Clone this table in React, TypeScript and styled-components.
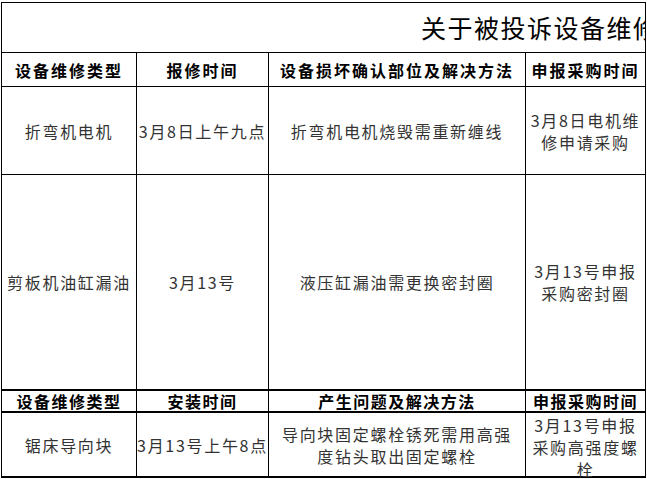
import React from "react";
import styled, { createGlobalStyle } from "styled-components";

const Global = createGlobalStyle`
  html, body {
    margin: 0;
    padding: 0;
    background: #ffffff;
  }
  body {
    font-family: "Noto Sans CJK SC", "Noto Sans", sans-serif;
    overflow: hidden;
  }
`;

const Sheet = styled.div`
  display: grid;
  grid-template-columns: 135px 132px 257px 120px;
  grid-template-rows: 50px 34px 88px 216px 22px 65px;
  width: max-content;
  margin: 2px 0 0 1px;
  border-left: 1px solid #000;
  border-top: 1px solid #000;
`;

const Cell = styled.div<{ $thick?: boolean }>`
  box-sizing: border-box;
  display: flex;
  flex-direction: column;
  align-items: center;
  justify-content: center;
  text-align: center;
  border-right: 1px solid #000;
  border-bottom: ${(p) => (p.$thick ? 2 : 1)}px solid #000;
  white-space: nowrap;
`;

const TitleCell = styled(Cell)`
  grid-column: 1 / -1;
  align-items: flex-start;
  padding-left: 419px;
  overflow: hidden;
  font-size: 25px;
  letter-spacing: 1.5px;
  color: #000;
  font-weight: 400;
  line-height: 1;
`;

const HeadCell = styled(Cell)<{ $tight?: boolean }>`
  font-size: 16px;
  font-weight: 700;
  letter-spacing: ${(p) => (p.$tight ? 1.5 : 2)}px;
  color: #000;
  line-height: ${(p) => (p.$tight ? 19 : 20)}px;
  justify-content: ${(p) => (p.$tight ? "flex-end" : "center")};
`;

const BodyCell = styled(Cell)<{ $full?: boolean }>`
  font-size: 16px;
  font-weight: 400;
  letter-spacing: 1.7px;
  color: #333;
  line-height: 22px;
  justify-content: ${(p) => (p.$full ? "flex-start" : "center")};
  padding-top: ${(p) => (p.$full ? 1 : 0)}px;
`;

const Line = styled.span`
  display: block;
`;

type Row = {
  type: string;
  time: string;
  fix: string[];
  buy: string[];
  thick?: boolean;
};

const topRows: Row[] = [
  {
    type: "折弯机电机",
    time: "3月8日上午九点",
    fix: ["折弯机电机烧毁需重新缠线"],
    buy: ["3月8日电机维", "修申请采购"],
  },
  {
    type: "剪板机油缸漏油",
    time: "3月13号",
    fix: ["液压缸漏油需更换密封圈"],
    buy: ["3月13号申报", "采购密封圈"],
    thick: true,
  },
];

const bottomRows: Row[] = [
  {
    type: "锯床导向块",
    time: "3月13号上午8点",
    fix: ["导向块固定螺栓锈死需用高强", "度钻头取出固定螺栓"],
    buy: ["3月13号申报", "采购高强度螺", "栓"],
    thick: true,
  },
];

const Lines = ({ lines }: { lines: string[] }) => (
  <>
    {lines.map((l, i) => (
      <Line key={i}>{l}</Line>
    ))}
  </>
);

const renderRow = (r: Row, k: number) => (
  <React.Fragment key={k}>
    <BodyCell $thick={r.thick}>{r.type}</BodyCell>
    <BodyCell $thick={r.thick}>{r.time}</BodyCell>
    <BodyCell $thick={r.thick}>
      <Lines lines={r.fix} />
    </BodyCell>
    <BodyCell $thick={r.thick} $full={r.buy.length > 2}>
      <Lines lines={r.buy} />
    </BodyCell>
  </React.Fragment>
);

export default function App() {
  return (
    <>
      <Global />
      <Sheet>
        <TitleCell>关于被投诉设备维修情况的说明</TitleCell>
        <HeadCell>设备维修类型</HeadCell>
        <HeadCell>报修时间</HeadCell>
        <HeadCell>设备损坏确认部位及解决方法</HeadCell>
        <HeadCell>申报采购时间</HeadCell>
        {topRows.map(renderRow)}
        <HeadCell $thick $tight>设备维修类型</HeadCell>
        <HeadCell $thick $tight>安装时间</HeadCell>
        <HeadCell $thick $tight>产生问题及解决方法</HeadCell>
        <HeadCell $thick $tight>申报采购时间</HeadCell>
        {bottomRows.map(renderRow)}
      </Sheet>
    </>
  );
}
